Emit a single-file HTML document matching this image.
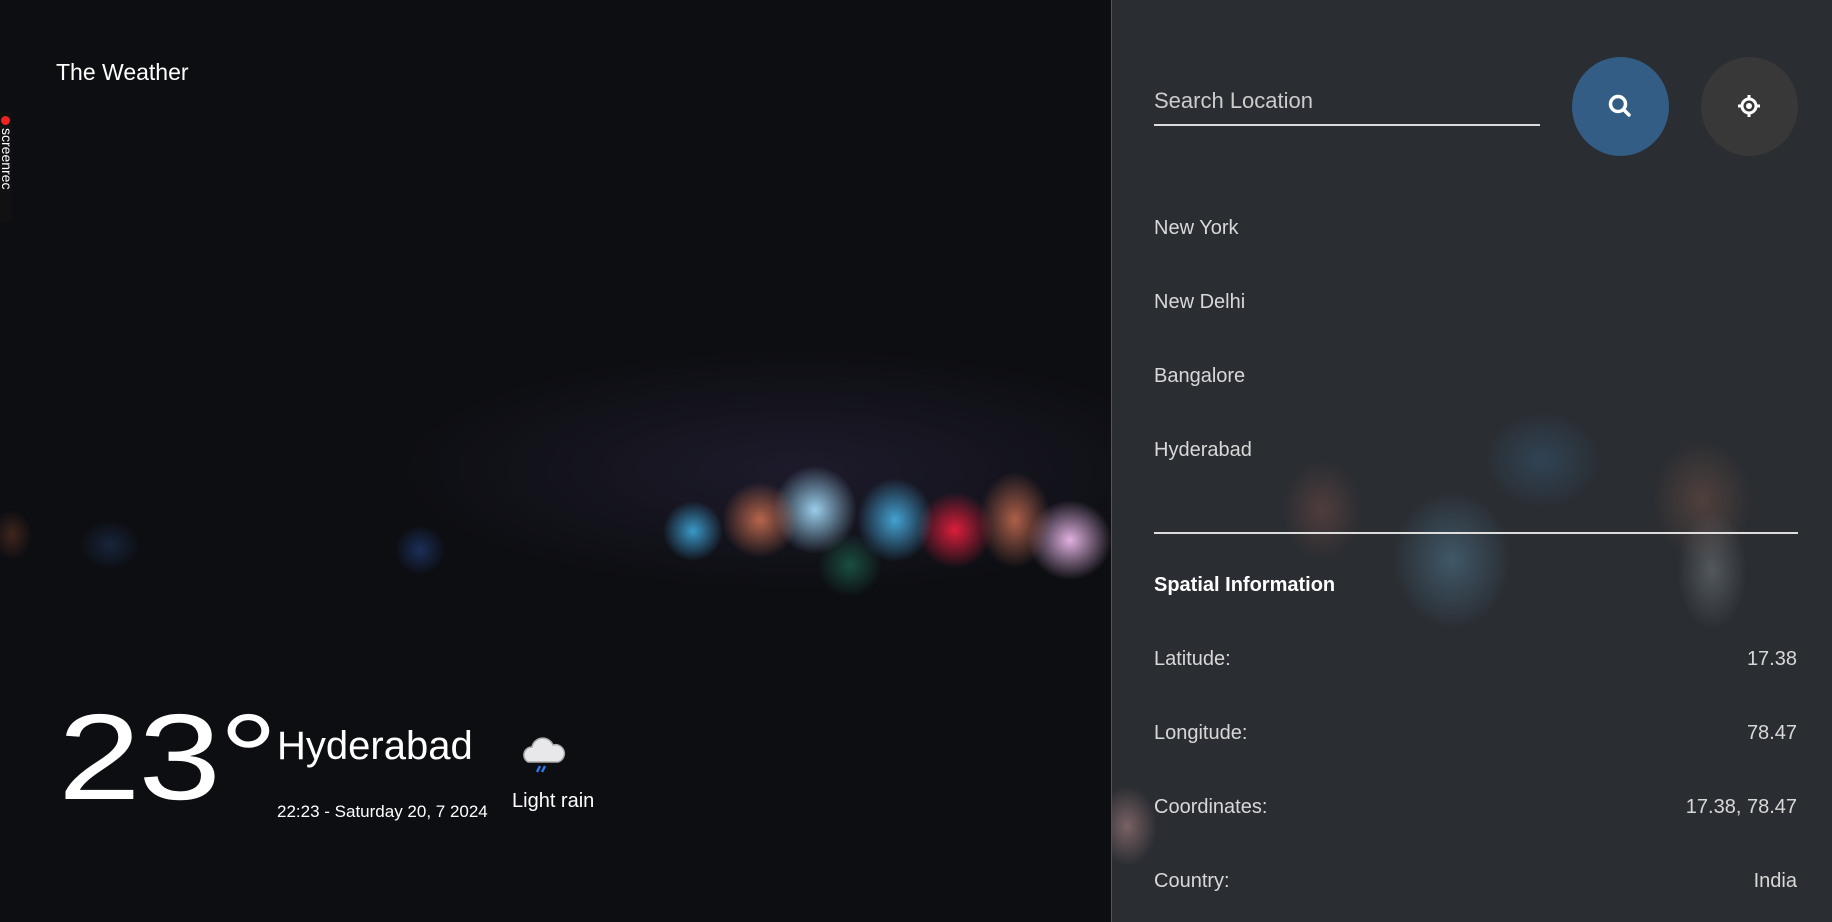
<!DOCTYPE html>
<html><head><meta charset="utf-8"><style>
*{margin:0;padding:0;box-sizing:border-box}
html,body{width:1832px;height:922px;overflow:hidden;background:#0c0d10;font-family:"Liberation Sans",sans-serif;color:#fff}
.bg{position:absolute;inset:0;background:
radial-gradient(ellipse 30px 30px at 693px 531px,rgba(60,160,210,.95),transparent 100%),
radial-gradient(ellipse 38px 38px at 760px 520px,rgba(200,110,80,.9),transparent 100%),
radial-gradient(ellipse 42px 44px at 815px 510px,rgba(160,215,245,.95),transparent 100%),
radial-gradient(ellipse 38px 42px at 895px 520px,rgba(70,170,220,.95),transparent 100%),
radial-gradient(ellipse 38px 38px at 955px 530px,rgba(230,30,60,.95),transparent 100%),
radial-gradient(ellipse 36px 48px at 1015px 520px,rgba(200,110,80,.85),transparent 100%),
radial-gradient(ellipse 42px 40px at 1070px 540px,rgba(235,185,235,.95),transparent 100%),
radial-gradient(ellipse 32px 32px at 850px 565px,rgba(30,120,90,.6),transparent 100%),
radial-gradient(ellipse 25px 25px at 420px 550px,rgba(40,80,160,.5),transparent 100%),
radial-gradient(ellipse 30px 25px at 110px 545px,rgba(40,70,120,.4),transparent 100%),
radial-gradient(ellipse 20px 25px at 12px 535px,rgba(160,80,50,.35),transparent 100%),
radial-gradient(ellipse 400px 120px at 800px 470px,rgba(40,35,60,.6),transparent 100%),
#0d0e12}
.side{position:absolute;left:1111px;top:0;width:721px;height:922px;border-left:1px solid #555;background:
radial-gradient(ellipse 60px 70px at 340px 560px,rgba(90,140,170,.45),transparent 100%),
radial-gradient(ellipse 40px 50px at 210px 510px,rgba(150,90,80,.35),transparent 100%),
radial-gradient(ellipse 50px 60px at 590px 500px,rgba(150,100,80,.35),transparent 100%),
radial-gradient(ellipse 35px 60px at 600px 570px,rgba(160,170,175,.35),transparent 100%),
radial-gradient(ellipse 60px 50px at 430px 460px,rgba(60,110,150,.35),transparent 100%),
radial-gradient(ellipse 30px 40px at 15px 826px,rgba(200,150,150,.5),transparent 100%),
#2a2d32}
.a{position:absolute}
.t{position:absolute;white-space:nowrap}
.city{left:42px;font-size:20px;color:#d8d8d8}
.row{position:absolute;left:42px;right:35px;font-size:20px;color:#d8d8d8;display:flex;justify-content:space-between}
</style></head><body>
<div class="bg"></div>
<div class="t" style="left:56px;top:59px;font-size:23px">The Weather</div>
<div style="position:absolute;left:0;top:112px;width:12px;height:110px;background:#111;border-radius:0 3px 3px 0"></div>
<div style="position:absolute;left:1px;top:116px;width:9px;height:9px;border-radius:50%;background:#e22"></div>
<div class="t" style="left:-1px;top:128px;font-size:14px;writing-mode:vertical-rl;color:#fff">screenrec</div>
<div class="t" style="left:58px;top:692px;font-size:122px;line-height:130px;letter-spacing:-2px;transform:scaleX(1.22);transform-origin:0 0">23°</div>
<div class="t" style="left:277px;top:724px;font-size:40px">Hyderabad</div>
<div class="t" style="left:277px;top:802px;font-size:17px">22:23 - Saturday 20, 7 2024</div>
<svg style="position:absolute;left:518px;top:730px" width="50" height="48" viewBox="0 0 50 48"><path d="M10 32 a8 8 0 0 1 4-15 a11 11 0 0 1 21-2 a8 8 0 0 1 5 17z" fill="#e8e8ea" stroke="#aaa" stroke-width="1.5"/><path d="M22 36 l-3 6 M27 36 l-3 6" stroke="#2a7be4" stroke-width="2.5"/></svg>
<div class="t" style="left:512px;top:790px;font-size:20px">Light rain</div>
<div class="side">
<div class="t" style="left:42px;top:88px;font-size:22px;color:#ccc">Search Location</div>
<div class="a" style="left:42px;top:124px;width:386px;height:1.5px;background:#ddd"></div>
<div class="a" style="left:460px;top:57px;width:97px;height:99px;border-radius:50%;background:#335d84"></div>
<svg class="a" style="left:492px;top:90px" width="32" height="32" viewBox="0 0 32 32"><circle cx="14" cy="14" r="7.5" fill="none" stroke="#fff" stroke-width="3.5"/><path d="M19.5 19.5 L25 25" stroke="#fff" stroke-width="3.5" stroke-linecap="round"/></svg>
<div class="a" style="left:589px;top:57px;width:97px;height:99px;border-radius:50%;background:#383838"></div>
<svg class="a" style="left:621px;top:90px" width="32" height="32" viewBox="0 0 32 32"><circle cx="16" cy="16" r="7" fill="none" stroke="#fff" stroke-width="3"/><circle cx="16" cy="16" r="3" fill="#fff"/><path d="M16 5v5M16 22v5M5 16h5M22 16h5" stroke="#fff" stroke-width="3"/></svg>
<div class="t city" style="top:217px">New York</div>
<div class="t city" style="top:291px">New Delhi</div>
<div class="t city" style="top:365px">Bangalore</div>
<div class="t city" style="top:439px">Hyderabad</div>
<div class="a" style="left:42px;top:532px;width:644px;height:1.5px;background:#ddd"></div>
<div class="t" style="left:42px;top:574px;font-size:20px;font-weight:bold">Spatial Information</div>
<div class="row" style="top:648px"><span>Latitude:</span><span>17.38</span></div>
<div class="row" style="top:722px"><span>Longitude:</span><span>78.47</span></div>
<div class="row" style="top:796px"><span>Coordinates:</span><span>17.38, 78.47</span></div>
<div class="row" style="top:870px"><span>Country:</span><span>India</span></div>
</div>
</body></html>
